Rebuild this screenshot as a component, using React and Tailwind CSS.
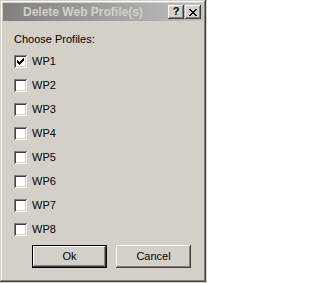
const profiles = ["WP1", "WP2", "WP3", "WP4", "WP5", "WP6", "WP7", "WP8"];

const raised =
  "shadow-[inset_-1px_-1px_#404040,inset_1px_1px_#ffffff,inset_-2px_-2px_#808080,inset_2px_2px_#d4d0c8]";

const Checkbox = ({ checked }) => (
  <div className="w-[13px] h-[13px] bg-white shadow-[inset_1px_1px_#808080,inset_-1px_-1px_#ffffff,inset_2px_2px_#404040,inset_-2px_-2px_#d4d0c8] flex items-center justify-center">
    {checked && (
      <svg width="7" height="7" viewBox="0 0 7 7" shapeRendering="crispEdges">
        <path
          d="M0 2h1v3h-1zM1 3h1v3h-1zM2 4h1v3h-1zM3 3h1v3h-1zM4 2h1v3h-1zM5 1h1v3h-1zM6 0h1v3h-1z"
          fill="#000"
        />
      </svg>
    )}
  </div>
);

const App = () => {
  return (
    <div className="w-[207px] h-[283px] bg-[#d4d0c8] font-['Liberation_Sans',Arial,sans-serif] text-[11px] text-black">
      <div className="w-[206px] h-[282px] bg-[#d4d0c8] shadow-[inset_-1px_-1px_#404040,inset_1px_1px_#d4d0c8,inset_-2px_-2px_#808080,inset_2px_2px_#ffffff] p-[3px] flex flex-col">
        {/* title bar */}
        <div className="h-[18px] bg-gradient-to-r from-[#808080] to-[#c0c0c0] flex items-center pl-[20px] pr-[2px]">
          <span className="flex-1 text-[12px] font-bold text-[#d4d0c8] leading-none">
            Delete Web Profile(s)
          </span>
          <div className="flex">
            <div className={`w-[16px] h-[14px] bg-[#d4d0c8] ${raised} flex items-center justify-center text-[11px] font-bold leading-none pb-[1px]`}>
              ?
            </div>
            <div className={`ml-[1px] w-[16px] h-[14px] bg-[#d4d0c8] ${raised} flex items-center justify-center`}>
              <svg width="8" height="7" viewBox="0 0 8 7" shapeRendering="crispEdges">
                <path
                  d="M0 0h2v1h-2zM6 0h2v1h-2zM1 1h2v1h-2zM5 1h2v1h-2zM2 2h4v1h-4zM3 3h2v1h-2zM2 4h4v1h-4zM1 5h2v1h-2zM5 5h2v1h-2zM0 6h2v1h-2zM6 6h2v1h-2z"
                  fill="#000"
                />
              </svg>
            </div>
          </div>
        </div>

        {/* body */}
        <div className="flex flex-col pl-[11px] pt-[12px]">
          <p className="leading-[13px]">Choose Profiles:</p>
          <div className="flex flex-col gap-[11px] mt-[9px]">
            {profiles.map((p, i) => (
              <div key={p} className="flex items-center gap-[5px] h-[13px]">
                <Checkbox checked={i === 0} />
                <span className="leading-[13px]">{p}</span>
              </div>
            ))}
          </div>
          <div className="flex gap-[9px] mt-[9px] pl-[18px]">
            <button className="w-[75px] h-[23px] bg-[#d4d0c8] border border-black shadow-[inset_-1px_-1px_#404040,inset_1px_1px_#ffffff,inset_-2px_-2px_#808080,inset_2px_2px_#d4d0c8] text-[11px] leading-none">
              Ok
            </button>
            <button className={`w-[75px] h-[23px] bg-[#d4d0c8] ${raised} text-[11px] leading-none`}>
              Cancel
            </button>
          </div>
        </div>
      </div>
    </div>
  );
};

export default App;
